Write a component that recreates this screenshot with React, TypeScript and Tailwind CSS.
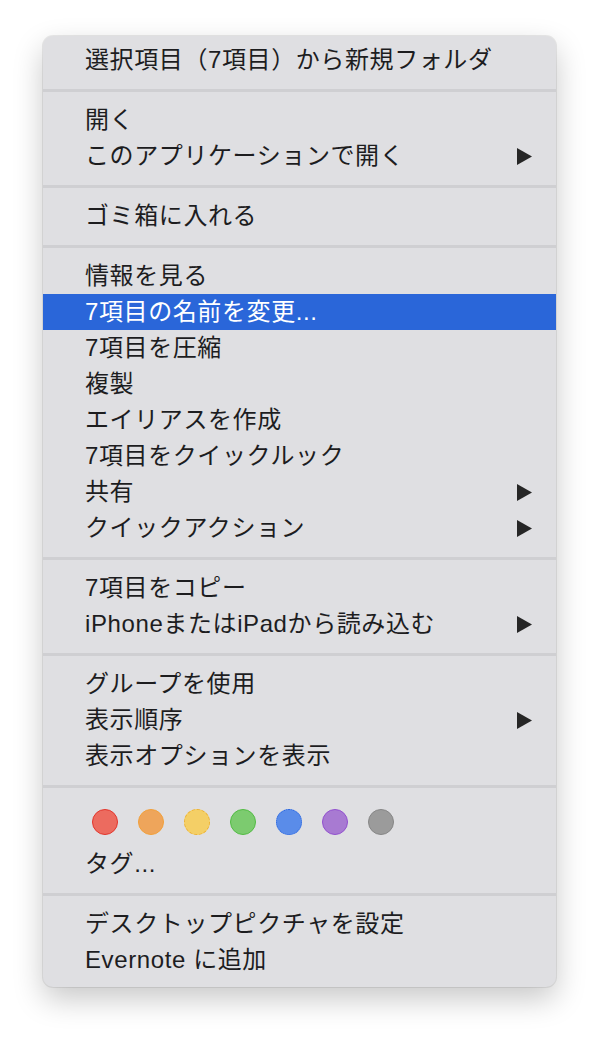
type Item = {
  label: string;
  submenu?: boolean;
  active?: boolean;
};

type Section = Item[] | "tags";

const sections: Section[] = [
  [{ label: "選択項目（7項目）から新規フォルダ" }],
  [{ label: "開く" }, { label: "このアプリケーションで開く", submenu: true }],
  [{ label: "ゴミ箱に入れる" }],
  [
    { label: "情報を見る" },
    { label: "7項目の名前を変更...", active: true },
    { label: "7項目を圧縮" },
    { label: "複製" },
    { label: "エイリアスを作成" },
    { label: "7項目をクイックルック" },
    { label: "共有", submenu: true },
    { label: "クイックアクション", submenu: true },
  ],
  [{ label: "7項目をコピー" }, { label: "iPhoneまたはiPadから読み込む", submenu: true }],
  [{ label: "グループを使用" }, { label: "表示順序", submenu: true }, { label: "表示オプションを表示" }],
  "tags",
  [{ label: "デスクトップピクチャを設定" }, { label: "Evernote に追加" }],
];

const tagColors = [
  { fill: "#ec6b5f", border: "#e3352b", style: "border-solid" },
  { fill: "#eea55b", border: "#f2a03a", style: "border-solid" },
  { fill: "#f4cf66", border: "#eeb12f", style: "border-dashed" },
  { fill: "#7ccb6f", border: "#52bb44", style: "border-solid" },
  { fill: "#5a8ce9", border: "#2562df", style: "border-dotted" },
  { fill: "#a87ad2", border: "#9250cf", style: "border-solid" },
  { fill: "#9b9b9b", border: "#868686", style: "border-solid" },
];

function Arrow({ active }: { active?: boolean }) {
  return (
    <svg width="17" height="19" viewBox="0 0 17 19" className="shrink-0">
      <path d="M1 1 L16 9.5 L1 18 Z" fill={active ? "#ffffff" : "#262626"} />
    </svg>
  );
}

function MenuRow({ item }: { item: Item }) {
  return (
    <div
      className={
        "flex h-[36px] items-center justify-between pl-[42px] pr-[23px] " +
        (item.active ? "bg-[#2a66d9] text-white" : "text-[#1d1d1f]")
      }
    >
      <span className="whitespace-nowrap tracking-[0.6px]">{item.label}</span>
      {item.submenu && <Arrow active={item.active} />}
    </div>
  );
}

function Separator() {
  return (
    <div className="flex h-[24px] items-center">
      <div className="h-[3px] w-full bg-[#cfcfd2]" />
    </div>
  );
}

function TagRow() {
  return (
    <div>
      <div className="flex h-[48px] items-center gap-[20px] pl-[49px]">
        {tagColors.map((c) => (
          <span
            key={c.fill}
            className={"h-[26px] w-[26px] rounded-full border-[1.5px] " + c.style}
            style={{ backgroundColor: c.fill, borderColor: c.border }}
          />
        ))}
      </div>
      <MenuRow item={{ label: "タグ..." }} />
    </div>
  );
}

export default function App() {
  return (
    <div className="min-h-[1039px] w-[600px] bg-white pl-[43px] pt-[36px] font-['Liberation_Sans','Noto_Sans_CJK_JP',sans-serif] text-[24px]">
      <div className="w-[513px] overflow-hidden rounded-[10px] bg-[#dfdfe2] pb-[9px] pt-[6px] shadow-[0_0_0_1px_rgba(0,0,0,0.08),0_12px_30px_rgba(0,0,0,0.22)]">
        {sections.map((section, i) => (
          <div key={i}>
            {i > 0 && <Separator />}
            {section === "tags" ? (
              <TagRow />
            ) : (
              section.map((item) => <MenuRow key={item.label} item={item} />)
            )}
          </div>
        ))}
      </div>
    </div>
  );
}
